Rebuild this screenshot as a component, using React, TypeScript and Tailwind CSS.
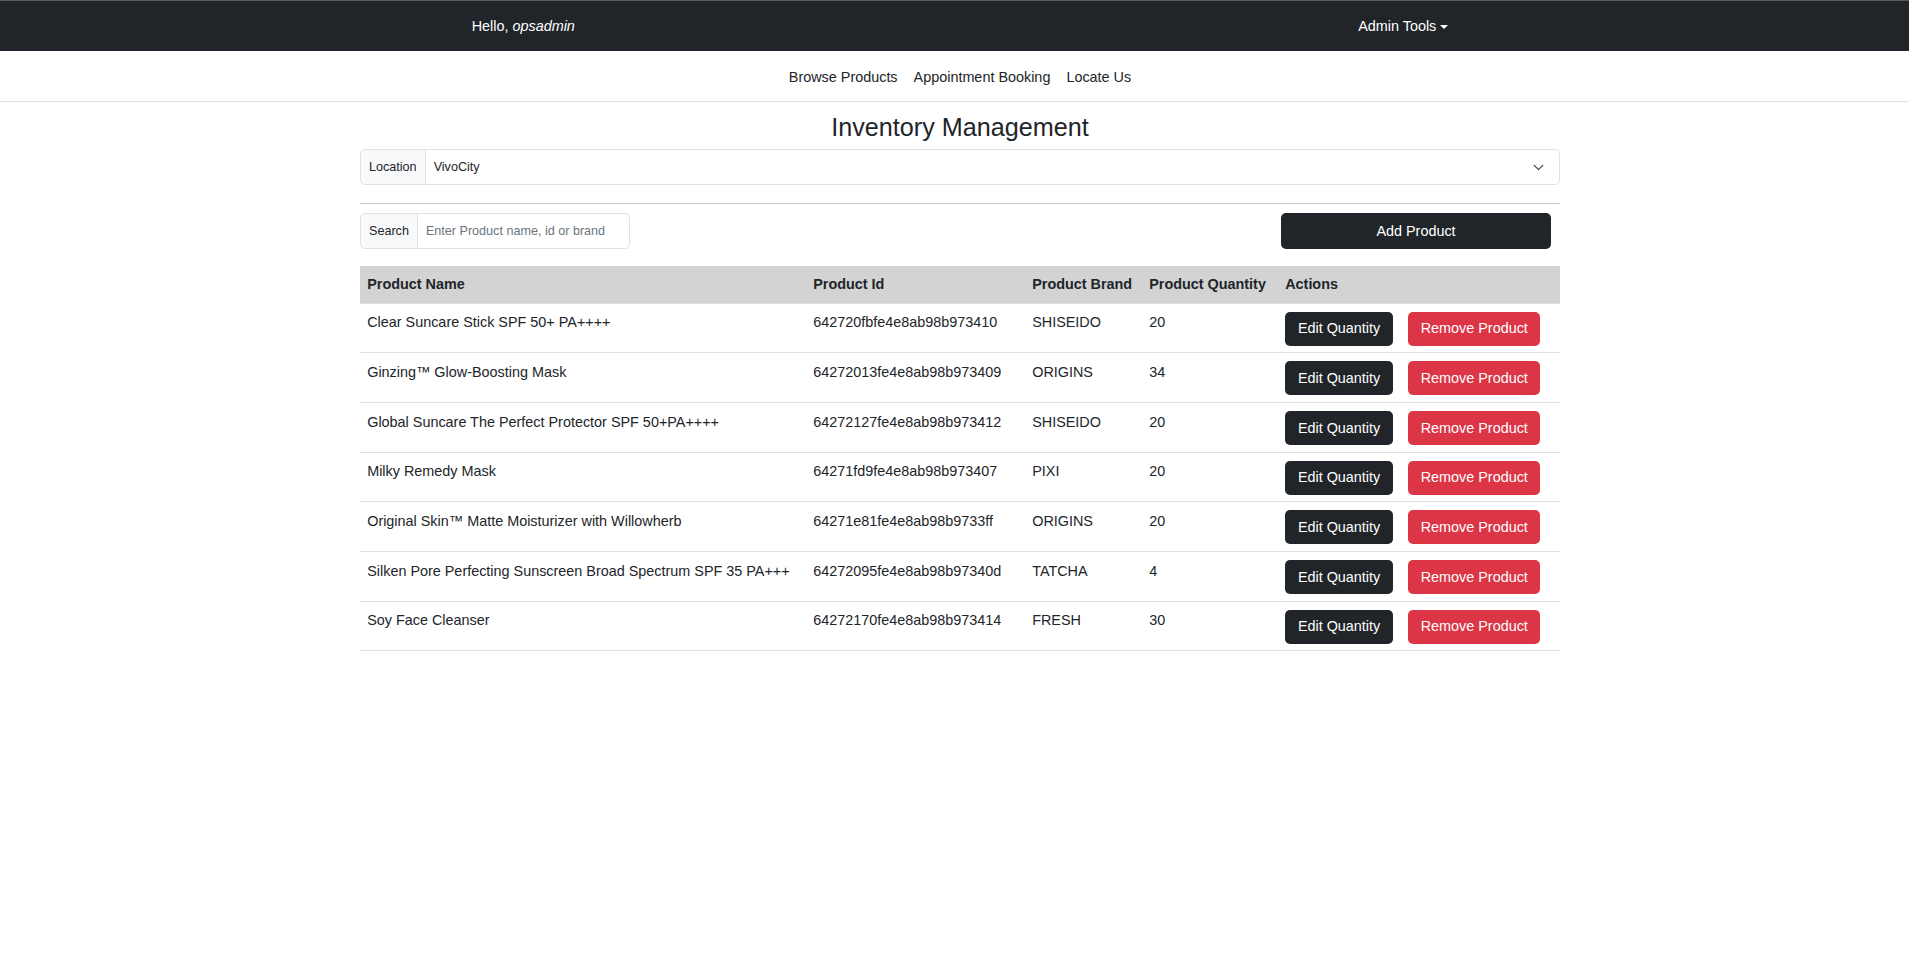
import React from 'react';

const products = [
  { name: 'Clear Suncare Stick SPF 50+ PA++++', id: '642720fbfe4e8ab98b973410', brand: 'SHISEIDO', qty: 20 },
  { name: 'Ginzing™ Glow-Boosting Mask', id: '64272013fe4e8ab98b973409', brand: 'ORIGINS', qty: 34 },
  { name: 'Global Suncare The Perfect Protector SPF 50+PA++++', id: '64272127fe4e8ab98b973412', brand: 'SHISEIDO', qty: 20 },
  { name: 'Milky Remedy Mask', id: '64271fd9fe4e8ab98b973407', brand: 'PIXI', qty: 20 },
  { name: 'Original Skin™ Matte Moisturizer with Willowherb', id: '64271e81fe4e8ab98b9733ff', brand: 'ORIGINS', qty: 20 },
  { name: 'Silken Pore Perfecting Sunscreen Broad Spectrum SPF 35 PA+++', id: '64272095fe4e8ab98b97340d', brand: 'TATCHA', qty: 4 },
  { name: 'Soy Face Cleanser', id: '64272170fe4e8ab98b973414', brand: 'FRESH', qty: 30 },
];

export default function App() {
  return (
    <div className="w-full overflow-hidden bg-white min-h-screen font-['Liberation_Sans',Arial,sans-serif] text-[14.4px] leading-[1.5] text-[#212529]">
      <div className="w-[1920px]">
        {/* top bar */}
        <div className="h-[51px] pt-[2px] bg-[#212529] border-t border-[#55595e] flex items-center justify-around px-20 text-white">
          <span>
            Hello, <i>opsadmin</i>
          </span>
          <span className="flex items-center">
            Admin Tools
            <span className="ml-[4px] inline-block w-0 h-0 border-x-[4px] border-x-transparent border-t-[4.5px] border-t-white" />
          </span>
        </div>

        {/* links */}
        <div className="h-[51px] pt-[4px] border-b border-[#dee2e6] flex items-center justify-center">
          {['Browse Products', 'Appointment Booking', 'Locate Us'].map((link) => (
            <a key={link} className="px-2 text-[#212529] cursor-pointer">
              {link}
            </a>
          ))}
        </div>

        <div className="w-[1200px] mx-auto">
          <h3 className="mt-[10px] mb-[7px] text-center text-[25.2px] leading-[30px] font-medium">
            Inventory Management
          </h3>

          {/* location */}
          <div className="flex h-[36px] text-[12.6px]">
            <span className="flex items-center px-2 bg-[#f8f9fa] border border-[#dee2e6] rounded-l-[5px]">
              Location
            </span>
            <div className="flex-1 flex items-center justify-between pl-2 pr-[15px] border border-l-0 border-[#dee2e6] rounded-r-[5px]">
              <span>VivoCity</span>
              <svg width="11" height="7" viewBox="0 0 11 7" fill="none">
                <path d="M1.2 1.4 5.5 5.6l4.3-4.2" stroke="#343a40" strokeWidth="1.1" strokeLinecap="round" strokeLinejoin="round" />
              </svg>
            </div>
          </div>

          <hr className="mt-[18px] mb-[9px] border-0 border-t border-[#c8c9ca]" />

          {/* search + add */}
          <div className="flex items-center justify-between">
            <div className="flex h-[36px] text-[12.6px]">
              <span className="flex items-center px-2 bg-[#f8f9fa] border border-[#dee2e6] rounded-l-[5px]">
                Search
              </span>
              <input
                className="w-[212px] px-2 border border-l-0 border-[#dee2e6] rounded-r-[5px] outline-none placeholder:text-[#6c757d]"
                placeholder="Enter Product name, id or brand"
              />
            </div>
            <button className="mr-[9px] w-[270px] h-[36px] pt-[1px] rounded-[5px] bg-[#212529] text-white">
              Add Product
            </button>
          </div>

          {/* table */}
          <table className="mt-[17px] w-full table-fixed border-collapse text-left">
            <colgroup>
              <col className="w-[446px]" />
              <col className="w-[219px]" />
              <col className="w-[117px]" />
              <col className="w-[136px]" />
              <col className="w-[123px]" />
              <col className="w-[159px]" />
            </colgroup>
            <thead>
              <tr className="bg-[#d3d3d3] border-b border-[#dee2e6]">
                <th className="px-[7.2px] pt-[8.4px] pb-[6.6px] font-bold">Product Name</th>
                <th className="px-[7.2px] pt-[8.4px] pb-[6.6px] font-bold">Product Id</th>
                <th className="px-[7.2px] pt-[8.4px] pb-[6.6px] font-bold">Product Brand</th>
                <th className="px-[7.2px] pt-[8.4px] pb-[6.6px] font-bold">Product Quantity</th>
                <th colSpan={2} className="px-[7.2px] pt-[8.4px] pb-[6.6px] font-bold">
                  Actions
                </th>
              </tr>
            </thead>
            <tbody>
              {products.map((p) => (
                <tr key={p.id} className="border-b border-[#dee2e6] align-top">
                  <td className="px-[7.2px] pt-[8.6px] pb-[6.1px]">{p.name}</td>
                  <td className="px-[7.2px] pt-[8.6px] pb-[6.1px]">{p.id}</td>
                  <td className="px-[7.2px] pt-[8.6px] pb-[6.1px]">{p.brand}</td>
                  <td className="px-[7.2px] pt-[8.6px] pb-[6.1px]">{p.qty}</td>
                  <td className="px-[7.2px] pt-[8px] pb-[6.7px]">
                    <button className="h-[34px] px-[12.7px] pt-[1px] rounded-[5px] bg-[#212529] text-white whitespace-nowrap">
                      Edit Quantity
                    </button>
                  </td>
                  <td className="px-[7.2px] pt-[8px] pb-[6.7px]">
                    <button className="h-[34px] px-[12.5px] pt-[1px] rounded-[5px] bg-[#dc3545] text-white whitespace-nowrap">
                      Remove Product
                    </button>
                  </td>
                </tr>
              ))}
            </tbody>
          </table>
        </div>
      </div>
    </div>
  );
}
